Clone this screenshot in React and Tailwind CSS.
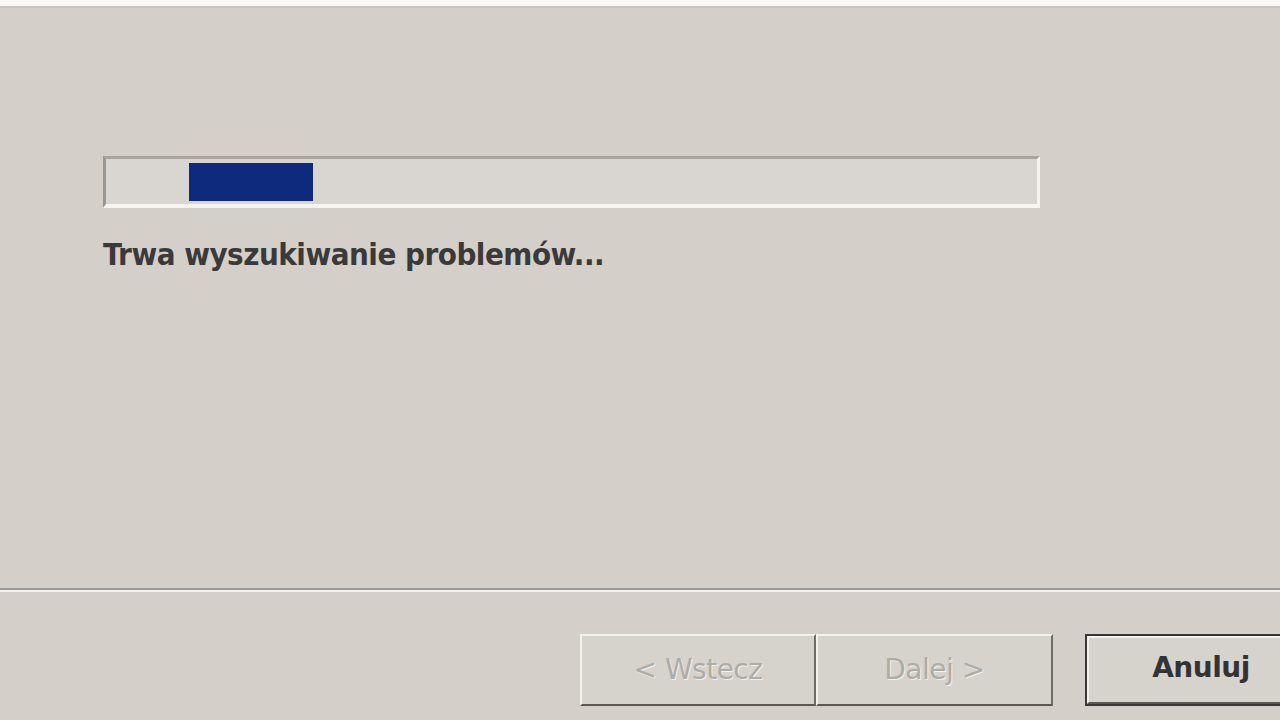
import React from "react";

function Btn({ children, disabled, primary, className = "" }) {
  const face = (
    <div className="flex h-full w-full items-center justify-center border-t-2 border-l-2 border-r-2 border-b-2 border-t-[#f4f2ee] border-l-[#f4f2ee] border-r-[#6e6c68] border-b-[#5a5854] bg-[#d6d3cd]">
      <span
        className={
          disabled
            ? "text-[#aeaca7] [text-shadow:1px_1px_0_#f2f0ec]"
            : "mb-[4px] ml-[12px] font-bold text-[#333333]"
        }
      >
        {children}
      </span>
    </div>
  );
  return (
    <div
      className={
        "h-[72px] shrink-0 " +
        (primary ? "border-2 border-[#3a3836] " : "") +
        className
      }
    >
      {face}
    </div>
  );
}

export default function App() {
  return (
    <div
      className="flex h-[720px] w-[1280px] flex-col overflow-hidden bg-[#d4d0c9] text-[28px] tracking-[-0.5px]"
      style={{ fontFamily: '"DejaVu Sans", "Liberation Sans", sans-serif' }}
    >
      {/* górny pasek */}
      <div className="h-[6px] bg-[#fbf9f7]" />
      <div className="h-[2px] bg-[#c9c5be]" />

      <div className="flex-1 pl-[103px] pt-[148px]">
        {/* pasek postępu */}
        <div className="h-[52px] w-[937px] border-t-[3px] border-l-[3px] border-r-[3px] border-b-[4px] border-t-[#a8a5a0] border-l-[#9a9792] border-r-[#f6f4f1] border-b-[#f6f4f1] bg-[#d9d6d1] pt-[4px] pl-[83px]">
          <div className="h-[38px] w-[124px] bg-[#0e2a7c]" />
        </div>
        <div
          className="mt-[28px] text-[31px] font-bold leading-[36px] tracking-[-0.5px] text-[#3a3a3a]"
          style={{ fontFamily: '"DejaVu Sans Condensed", "DejaVu Sans", sans-serif' }}
        >
          Trwa wyszukiwanie problemów...
        </div>
      </div>

      {/* separator */}
      <div className="h-[2px] bg-[#9c9994]" />
      <div className="h-[2px] bg-[#f3f1ee]" />

      <div className="flex h-[128px] items-start pt-[42px] pl-[580px]">
        <Btn disabled className="w-[236px]">
          &lt; Wstecz
        </Btn>
        <Btn disabled className="w-[237px]">
          Dalej &gt;
        </Btn>
        <Btn primary className="ml-[32px] w-[220px]">
          Anuluj
        </Btn>
      </div>
    </div>
  );
}
